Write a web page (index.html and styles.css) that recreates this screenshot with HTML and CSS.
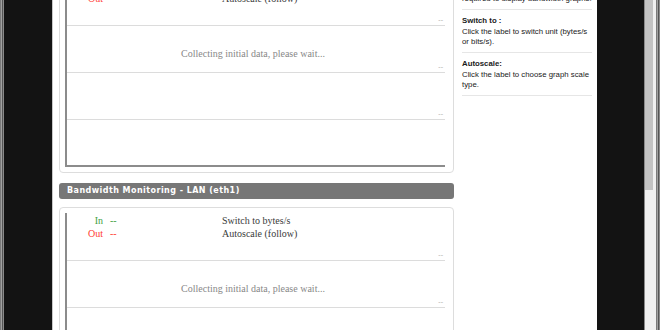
FILE: index.html
```html
<!doctype html>
<html>
  <head>
    <meta charset="utf-8" />
    <title>Traffic Graph</title>
    <link rel="stylesheet" href="styles.css">
  </head>
  <body>
    <div class="screen">
      <div class="frame"></div>
      <div class="gutter gutter-l"></div>
      <div class="page">
        <div class="page-inner">
          <div class="main">
            <div class="panel">
              <div class="chart">
                <div class="row row-top">
                  <div class="legend">
                    <span class="lbl in">In</span><span class="val in">--</span><span class="ctl">Switch to bytes/s</span>
                    <span class="lbl out">Out</span><span class="val out">--</span><span class="ctl">Autoscale (follow)</span>
                  </div>
                  <span class="tick">--</span>
                </div>
                <div class="row">
                  <div class="msg">Collecting initial data, please wait...</div>
                  <span class="tick">--</span>
                </div>
                <div class="row">
                  <span class="tick">--</span>
                </div>
                <div class="row row-last"></div>
              </div>
            </div>

            <div class="panel-head">Bandwidth Monitoring - LAN (eth1)</div>

            <div class="panel">
              <div class="chart">
                <div class="row row-top">
                  <div class="legend">
                    <span class="lbl in">In</span><span class="val in">--</span><span class="ctl">Switch to bytes/s</span>
                    <span class="lbl out">Out</span><span class="val out">--</span><span class="ctl">Autoscale (follow)</span>
                  </div>
                  <span class="tick">--</span>
                </div>
                <div class="row">
                  <div class="msg">Collecting initial data, please wait...</div>
                  <span class="tick">--</span>
                </div>
                <div class="row">
                  <span class="tick">--</span>
                </div>
                <div class="row row-last"></div>
              </div>
            </div>
          </div>

          <div class="side">
            <div class="side-sect first">
              <div class="side-title">Note:</div>
              <div class="side-text">An SVG capable browser is<br />required to display bandwidth graphs.</div>
            </div>
            <div class="side-sect">
              <div class="side-title">Switch to :</div>
              <div class="side-text">Click the label to switch unit (bytes/s or bits/s).</div>
            </div>
            <div class="side-sect">
              <div class="side-title">Autoscale:</div>
              <div class="side-text">Click the label to choose graph scale type.</div>
            </div>
          </div>
        </div>
      </div>
      <div class="gutter gutter-r"></div>
      <div class="scrollbar"><div class="thumb"></div></div>
      <div class="frame"></div>
    </div>
  </body>
</html>
```

FILE: styles.css
```css
body {
  margin: 0;
  background: #131313;
  font-family: "Liberation Serif", serif;
}

.screen {
  display: flex;
  height: 330px;
  width: 660px;
  overflow: hidden;
}

.frame {
  width: 4px;
  flex: none;
  background: linear-gradient(to right, #7a7a7a 0, #7a7a7a 1px, #a0a0a0 1px, #a0a0a0 2px, #555 2px, #555 3px, #8a8a8a 3px);
}

.gutter {
  flex: none;
  background: #131313;
}

.gutter-l {
  width: 48px;
}

.gutter-r {
  width: 47px;
}

.page {
  flex: none;
  width: 545px;
  box-sizing: border-box;
  border-left: 1px solid #c8c8c8;
  background: #fff;
  overflow: hidden;
}

/* page is scrolled down a little */
.page-inner {
  display: flex;
  margin-top: -28px;
  padding-left: 6px;
}

.main {
  width: 395px;
  flex: none;
}

.panel {
  border: 1px solid #ddd;
  border-radius: 4px;
  padding: 5px 8px 5px 5px;
}

.chart {
  border-left: 2px solid #8c8c8c;
  border-bottom: 2px solid #8c8c8c;
  width: 378px;
}

.row {
  display: flex;
  flex-direction: column;
  height: 46px;
  border-bottom: 1px solid #dcdcdc;
}

.row-top {
  height: 47px;
}

.row-last {
  height: 45px;
  border-bottom: none;
}

.legend {
  display: grid;
  grid-template-columns: 36px 119px auto;
  font-size: 10px;
  line-height: 13px;
  padding-top: 1px;
  color: #3a3a3a;
}

.lbl {
  text-align: right;
}

.val {
  padding-left: 7px;
}

.in {
  color: #3f9f3f;
}

.out {
  color: #ff3b30;
}

.msg {
  text-align: center;
  font-size: 10px;
  line-height: 12px;
  padding: 22px 0 0 0;
  margin-left: -6px;
  color: #888;
}

.tick {
  margin-top: auto;
  text-align: right;
  padding-right: 2px;
  margin-bottom: 1px;
  font-size: 7px;
  line-height: 7px;
  color: #999;
}

.panel-head {
  margin: 10px 0 8px;
  height: 16px;
  line-height: 16px;
  border-radius: 3px;
  background: #777;
  color: #fff;
  font-family: "DejaVu Sans", sans-serif;
  font-weight: bold;
  font-size: 8px;
  letter-spacing: 0.45px;
  padding-left: 8px;
}

.side {
  width: 142px;
  flex: none;
  box-sizing: border-box;
  margin-left: 1px;
  padding: 0 5px 0 7px;
  font-family: "Liberation Sans", sans-serif;
  font-size: 7.8px;
  line-height: 10px;
  color: #1a1a1a;
}

.side-sect {
  padding: 6px 0 5px;
  border-bottom: 1px solid #e6e6e6;
}

.side-sect.first {
  padding-top: 1px;
}

.side-title {
  font-weight: bold;
  margin-bottom: 1px;
}

.scrollbar {
  flex: none;
  width: 12px;
  box-sizing: border-box;
  border-left: 1px solid #8a8a8a;
  background: #f0f0f0;
}

.thumb {
  width: 8px;
  height: 190px;
  background: #c3c3c3;
}
```
